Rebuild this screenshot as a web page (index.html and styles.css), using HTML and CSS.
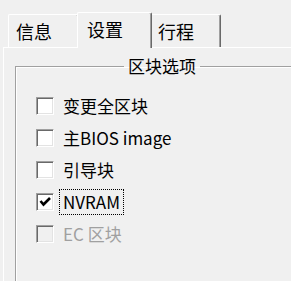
FILE: index.html
```html
<!DOCTYPE HTML>
<html>
<head>
<meta http-equiv="Content-Type" content="text/html; charset=utf-8">
<title>设置</title>
<link rel="stylesheet" href="styles.css">
</head>
<body>
<div class="tabs">
	<div class="tab">信息</div>
	<div class="tab on">设置</div>
	<div class="tab">行程</div>
</div>
<div class="panel">
	<fieldset class="group">
		<legend>区块选项</legend>
		<div class="row"><span class="box"></span><span class="txt">变更全区块</span></div>
		<div class="row"><span class="box"></span><span class="txt">主BIOS image</span></div>
		<div class="row"><span class="box"></span><span class="txt">引导块</span></div>
		<div class="row"><span class="box"><svg width="18" height="18" viewBox="0 0 18 18"><polyline points="4.5,8 7.5,11.5 14,5" fill="none" stroke="#000" stroke-width="2.6"/></svg></span><span class="txt focus">NVRAM</span></div>
		<div class="row off"><span class="box"></span><span class="txt">EC 区块</span></div>
	</fieldset>
</div>
</body>
</html>
```
FILE: styles.css
```css
html,body{height:100%;}
body{margin:0; background-color:#f0f0f0; color:#000; font-family:"Noto Sans CJK SC","Noto Sans",sans-serif; font-size:17px; overflow:hidden;}
.tabs{display:flex; align-items:flex-end; padding:12px 0 0 8px; height:47px; box-sizing:border-box;}
.tab{width:71px; height:33px; box-sizing:border-box; padding-left:7px; line-height:33px; font-size:18px; border-top:1px solid #fff; border-left:1px solid #fff; border-right:1px solid #696969; box-shadow:inset -1px 0 #a0a0a0; border-radius:2px 2px 0 0; background-color:#f0f0f0;}
.tab.on{width:75px; height:36px; margin:0 -2px -1px -2px; padding-left:9px; line-height:32px; position:relative; z-index:1;}
.panel{margin-left:3px; border-top:1px solid #fff; border-left:1px solid #fff; height:300px;}
.group{margin:7px 0 0 11px; padding:0 0 0 20px; width:400px; height:300px; border:1px solid #a0a0a0; box-shadow:inset 1px 1px 0 #fff;}
.group legend{margin-left:88px; padding:0 4px; line-height:22px;}
.row{display:flex; align-items:center; height:32px;}
.row:first-of-type{margin-top:13px;}
.box{width:18px; height:18px; box-sizing:border-box; border:1px solid; border-color:#a0a0a0 #fff #fff #a0a0a0; box-shadow:inset 1px 1px 0 #696969, inset -1px -1px 0 #e3e3e3; background-color:#fff; margin-right:9px;}
.box svg{display:block; margin:-1px;}
.txt{line-height:22px;}
.focus{outline:1px dotted #000; outline-offset:1px; padding:0 2px; margin-left:-2px;}
.off .box{background-color:#f0f0f0;}
.off .txt{color:#a0a0a0;}
```
